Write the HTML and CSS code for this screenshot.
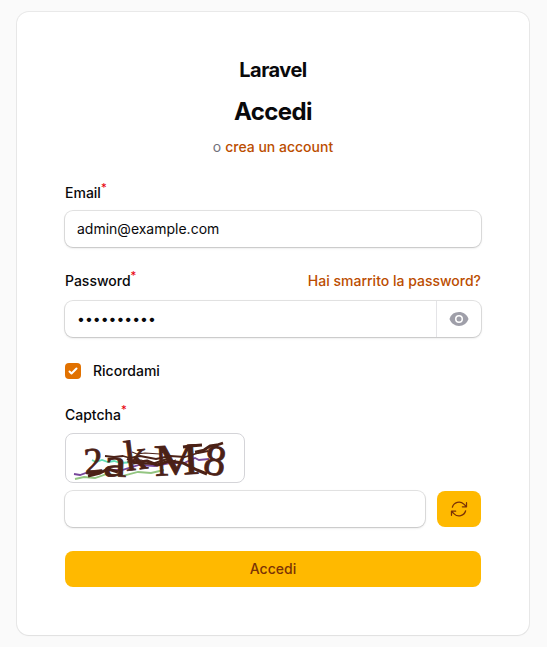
FILE: index.html
```html
<!DOCTYPE html>
<html lang="it">
<head>
<meta charset="utf-8">
<title>Accedi - Laravel</title>
<link rel="stylesheet" href="styles.css">
</head>
<body>
<main class="card">
  <header class="header">
    <div class="logo">Laravel</div>
    <h1 class="heading">Accedi</h1>
    <p class="subheading">o <a class="link">crea un account</a></p>
  </header>
  <form class="form">
    <div class="field">
      <label class="label" for="email">Email<sup>*</sup></label>
      <div class="control"><input id="email" class="input" type="text" value="admin@example.com"></div>
    </div>
    <div class="field">
      <div class="label-row">
        <label class="label" for="password">Password<sup>*</sup></label>
        <a class="link">Hai smarrito la password?</a>
      </div>
      <div class="control">
        <input id="password" class="input" type="password" value="0123456789">
        <div class="suffix">
          <svg class="eye" viewBox="0 0 20 20" fill="currentColor"><path d="M10 12.5a2.5 2.5 0 1 0 0-5 2.5 2.5 0 0 0 0 5Z"/><path fill-rule="evenodd" d="M.664 10.59a1.651 1.651 0 0 1 0-1.186A10.004 10.004 0 0 1 10 3c4.257 0 7.893 2.66 9.336 6.41.147.381.146.804 0 1.186A10.004 10.004 0 0 1 10 17c-4.257 0-7.893-2.66-9.336-6.41ZM14 10a4 4 0 1 1-8 0 4 4 0 0 1 8 0Z" clip-rule="evenodd"/></svg>
        </div>
      </div>
    </div>
    <div class="remember">
      <span class="checkbox"><svg viewBox="0 0 16 16" fill="#fff"><path d="M12.207 4.793a1 1 0 0 1 0 1.414l-5 5a1 1 0 0 1-1.414 0l-2-2a1 1 0 0 1 1.414-1.414L6.5 9.086l4.293-4.293a1 1 0 0 1 1.414 0z"/></svg></span>
      <span class="remember-text">Ricordami</span>
    </div>
    <div class="field">
      <label class="label" for="captcha">Captcha<sup>*</sup></label>
      <div class="captcha">
      <svg viewBox="1 1 178 48">
        <g fill="none" stroke-width="1.8">
          <path stroke="#62ddb5" d="M27 27l4 2 6-2 6 2 6-1 7 2 12-1 13 2"/>
          <path stroke="#77479a" d="M9 41l6 1 6-2 9 1 13-4 14 0 17-5 16 1 15-3 14 0 11-5 4 2 10-1"/>
          <path stroke="#93c581" d="M10 46l9-2 11 1 12-4 15 2 16-4 13 1 13-3"/>
        </g>
        <g class="captcha-text">
          <text transform="translate(20 41) rotate(-5) scale(1.04 1)" font-size="37">2</text>
          <text transform="translate(38 43) rotate(2) scale(1.3 1)" font-size="40">a</text>
          <text transform="translate(61 38) rotate(-7) scale(1.05 1)" font-size="43">k</text>
          <text transform="translate(90 43) rotate(-3) scale(1.12 1)" font-size="45">M</text>
          <text transform="translate(137 40) rotate(9) scale(1.02 1)" font-size="43">8</text>
        </g>
        <g fill="none" stroke="#4b2116" stroke-linejoin="round">
          <path stroke-width="1.8" d="M40 23l9 1 9-1 7 2 10-2 16 3 14-3 15 1 13-4 10-2"/>
          <path stroke-width="3" d="M23 43l12-3 8-4 10 3M68 30l14-2 10 4 12-4 14 2 14 7 10 4"/>
          <path stroke-width="2.2" d="M62 26l9 4 16 1 15-5"/>
          <path stroke-width="1.2" d="M67 19l5 2 8-1 15 1M62 29l14-2 18 5 17-5"/>
          <path stroke-width="2.8" d="M118 14l7-1 12-1M130 19l9-2 6-4 7-1 6-2"/>
        </g>
      </svg>
      </div>
      <div class="captcha-row">
        <div class="control"><input id="captcha" class="input" type="text"></div>
        <button class="button refresh" type="button" aria-label="Aggiorna">
          <svg viewBox="0 0 24 24" fill="none" stroke="currentColor" stroke-width="1.5" stroke-linecap="round" stroke-linejoin="round"><path d="M16.023 9.348h4.992v-.001M2.985 19.644v-4.992m0 0h4.992m-4.993 0 3.181 3.183a8.25 8.25 0 0 0 13.803-3.7M4.031 9.865a8.25 8.25 0 0 1 13.803-3.7l3.181 3.182m0-4.991v4.99"/></svg>
        </button>
      </div>
    </div>
    <button class="button" type="button">Accedi</button>
  </form>
</main>
</body>
</html>
```
FILE: styles.css
```css
* { box-sizing: border-box; }
body {
  margin: 0;
  height: 647px;
  padding: 12px 18px 0 17px;
  overflow: hidden;
  background: #fafafa;
  color: #09090b;
  font: 14px/20px Inter, sans-serif;
}
.card {
  height: 623px;
  padding: 48px;
  border-radius: 12px;
  background: #fff;
  box-shadow: 0 0 0 1px rgba(9, 9, 11, .07), 0 1px 2px rgba(0, 0, 0, .04);
}
.header { display: flex; flex-direction: column; align-items: center; }
.logo { font-size: 20px; line-height: 20px; font-weight: 700; letter-spacing: -.5px; }
.heading { margin: 16px 0 0; font-size: 24px; line-height: 32px; font-weight: 700; letter-spacing: -.6px; }
.subheading { margin: 8px 0 0; line-height: 21px; color: #71717b; }
.link { color: #bb4d00; font-weight: 500; }
.form { display: flex; flex-direction: column; gap: 24px; margin-top: 26px; }
.field { display: flex; flex-direction: column; }
.label { height: 20px; margin-bottom: 8px; font-weight: 500; }
.label sup { color: #e7000b; font-size: 11.5px; font-weight: 400; line-height: 0; vertical-align: super; }
.label-row { display: flex; justify-content: space-between; margin-bottom: 2px; }
.control {
  display: flex;
  flex: 1 0 36px;
  min-width: 0;
  height: 36px;
  border-radius: 8px;
  background: #fff;
  box-shadow: 0 0 0 1px rgba(9, 9, 11, .11), 0 1px 3px rgba(0, 0, 0, .1), 0 1px 2px rgba(0, 0, 0, .06);
}
.input {
  flex: 1;
  min-width: 0;
  padding: 0 12px;
  border: 0;
  outline: 0;
  background: none;
  color: #09090b;
  font: 14px/24px Inter, sans-serif;
}
.suffix {
  display: flex;
  align-items: center;
  justify-content: center;
  width: 45px;
  border-left: 1px solid #e4e4e7;
  color: #9f9fa9;
}
.eye { width: 20px; height: 20px; }
.remember { display: flex; align-items: center; gap: 12px; height: 20px; }
.remember-text { font-weight: 500; }
.checkbox { width: 16px; height: 16px; border-radius: 4px; background: #e17100; }
.checkbox svg { display: block; width: 16px; height: 16px; }
.captcha { width: 180px; height: 50px; border: 1px solid #d4d4d8; border-radius: 8px; }
.captcha svg { display: block; width: 178px; height: 48px; overflow: visible; }
.captcha-text { fill: #4b2116; stroke: #4b2116; stroke-width: .8; font-family: "Liberation Serif", serif; }
.captcha-row { display: flex; gap: 12px; margin-top: 8px; }
.button {
  height: 36px;
  padding: 0;
  border: 0;
  border-radius: 8px;
  background: #ffb900;
  color: #7b3306;
  font: 500 14px/20px Inter, sans-serif;
}
.refresh { display: flex; align-items: center; justify-content: center; width: 44px; }
.refresh svg { width: 20px; height: 20px; }
```
